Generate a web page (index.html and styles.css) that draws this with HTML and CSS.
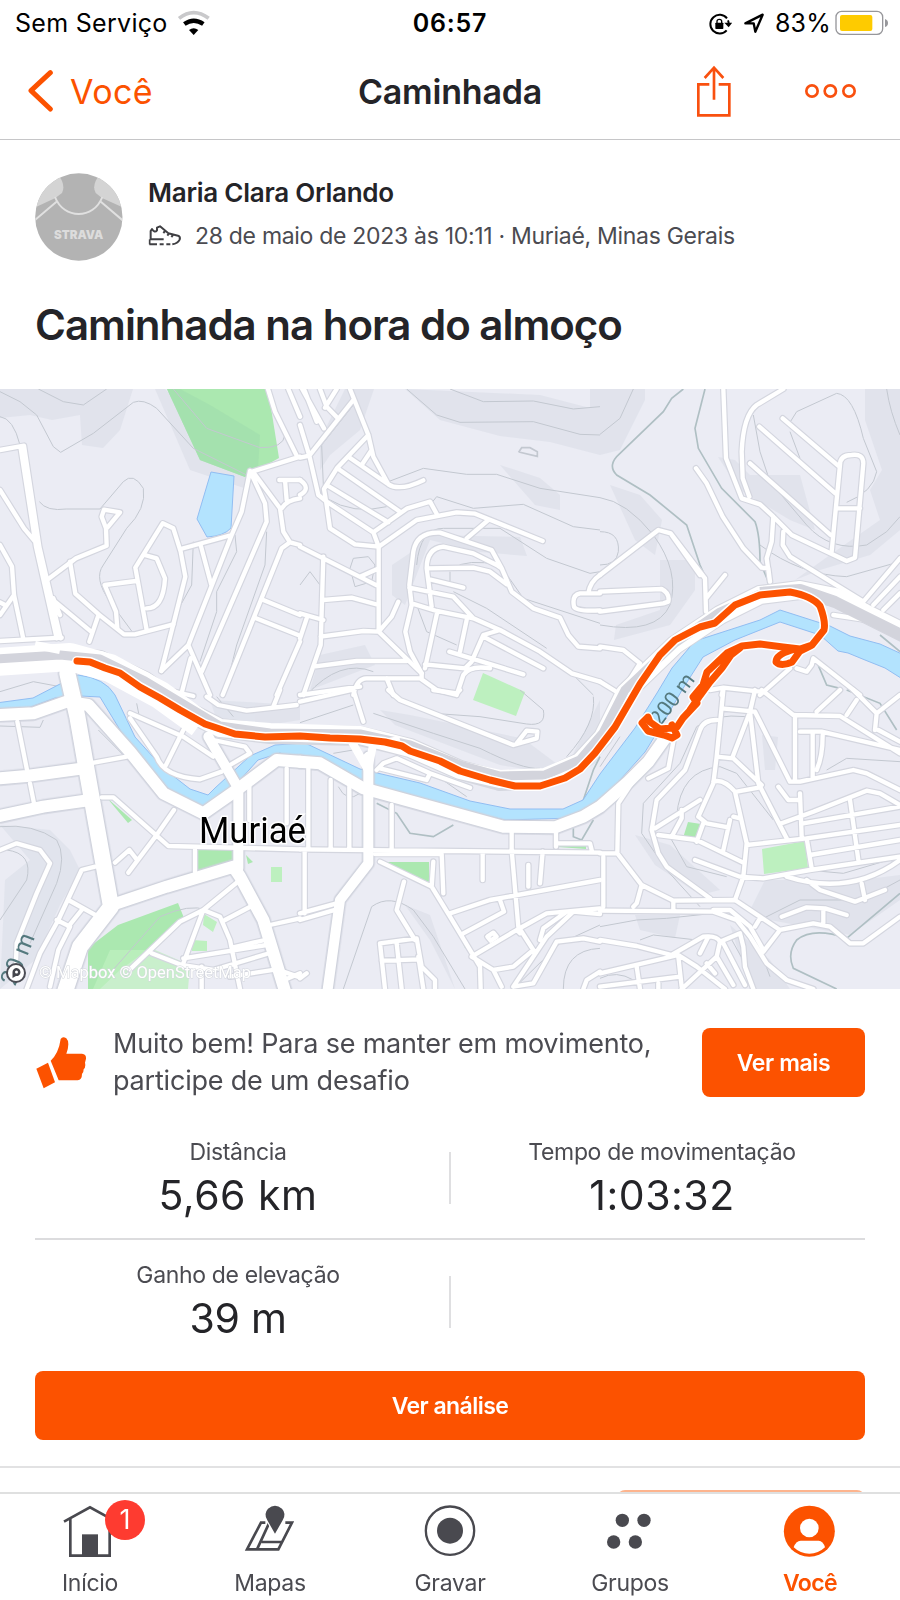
FILE: index.html
```html
<!DOCTYPE html>
<html lang="pt-BR">
<head>
<meta charset="utf-8">
<title>Caminhada</title>
<link rel="stylesheet" href="styles.css">
</head>
<body>
<div class="screen">
  <header class="status">
    <div class="status-left">
      <span class="carrier">Sem Serviço</span>
      <svg class="wifi" width="34" height="26" viewBox="530 25 102 78">
        <path d="M536 50Q580 16 625 50" fill="none" stroke="#c9c9cb" stroke-width="11"/>
        <path d="M552 67Q580 47 609 67" fill="none" stroke="#000" stroke-width="13"/>
        <path d="M566 85Q580 74 594 85L580 100Z"/>
      </svg>
    </div>
    <span class="clock">06:57</span>
    <div class="status-right">
      <svg class="lock" width="24" height="24" viewBox="775 33 72 72">
        <path d="M832 52A28 28 0 1 0 831 88M835 58Q838 64 837 72" fill="none" stroke="#000" stroke-width="6"/>
        <path d="M824 65L848 65L837 79Z"/>
        <rect x="797" y="65" width="24" height="19" rx="2"/>
        <path d="M802 67V61Q802 55 809 55Q816 55 816 61V67" fill="none" stroke="#000" stroke-width="4"/>
      </svg>
      <svg class="arrow" width="22" height="22" viewBox="880 34 66 66">
        <path d="M887 68L939 42L917 93L912 68Z" fill="none" stroke="#000" stroke-width="7" stroke-linejoin="round"/>
      </svg>
      <span class="percent">83%</span>
      <svg class="battery" width="54" height="26" viewBox="1155 27 162 78">
        <rect x="1158" y="31" width="140" height="69" rx="17" fill="none" stroke="#97979b" stroke-width="4"/>
        <rect x="1170" y="42" width="97" height="48" rx="6" fill="#fecb00"/>
        <path d="M1305 54Q1314 57 1314 66Q1314 75 1305 78Z" fill="#97979b"/>
      </svg>
    </div>
  </header>

  <nav class="nav">
    <div class="back">
      <svg width="26" height="44" viewBox="82 208 78 132"><path d="M149 219L91 273L149 328" fill="none" stroke="#fc5200" stroke-width="15" stroke-linecap="round" stroke-linejoin="round"/></svg>
      <span class="back-text">Você</span>
    </div>
    <h1 class="nav-title">Caminhada</h1>
    <div class="actions">
      <svg width="36" height="54" viewBox="738 192 108 162"><g fill="none" stroke="#f9500f" stroke-width="8"><path d="M778 253H745V346H838V253H806"/><path d="M792 299V202M764 234L792 203L820 234"/></g></svg>
      <svg width="54" height="16" viewBox="1062 248 162 48"><g fill="none" stroke="#f9500f" stroke-width="8"><circle cx="1086" cy="272" r="17"/><circle cx="1141" cy="272" r="17"/><circle cx="1197" cy="272" r="17"/></g></svg>
    </div>
  </nav>

  <section class="athlete">
    <svg class="avatar" width="88" height="88" viewBox="104 520 264 264">
      <defs><clipPath id="av"><circle cx="235.500" cy="652" r="131"/></clipPath></defs>
      <g clip-path="url(#av)">
        <rect x="104" y="520" width="264" height="264" fill="#b3b3b3"/>
        <path d="M170 520Q198 555 185 580L165 595L100 625V520Z" fill="#d4d4d4"/>
        <path d="M302 520Q272 555 286 580L305 595L372 625V520Z" fill="#d4d4d4"/>
        <path d="M96 668L172 603M374 668L298 603M164 592C190 660 280 660 306 592" fill="none" stroke="#e0e0e0" stroke-width="6"/>
        <text class="avatar-text" x="161" y="717" textLength="148" lengthAdjust="spacingAndGlyphs">STRAVA</text>
      </g>
    </svg>
    <div class="athlete-info">
      <div class="name">Maria Clara Orlando</div>
      <div class="meta">
        <svg width="34" height="22" viewBox="445 682 102 66"><path d="M453 725V700L457 694Q465 707 472 698V690L481 686L506 707L535 714Q543 717 540 726Q534 738 518 740M450 725H492M449 740H472M480 740H492M500 740H512M491 706L498 698M503 714L509 706M515 718L521 711" fill="none" stroke="#3f3f43" stroke-width="6" stroke-linejoin="round"/><path d="M450 725V740" stroke="#3f3f43" stroke-width="5"/></svg>
        <span class="date">28 de maio de 2023 às 10:11 · Muriaé, Minas Gerais</span>
      </div>
    </div>
  </section>

  <h2 class="title">Caminhada na hora do almoço</h2>

  <svg class="map" width="900" height="600" viewBox="0 389 900 600">
    <defs>
      <g id="minor">
        <g transform="translate(0 385) scale(.33333)">
          <path d="M0 195L72 182L118 485L182 760M62 190L108 485L170 760M0 315L72 430L118 485M0 480L36 545L42 630L70 762M0 690L42 630M0 652L15 660"/>
          <path d="M0 768L185 758M145 582L228 520L320 482L318 430L305 395L312 374L360 382L322 428"/>
          <path d="M210 530L226 626L296 688L372 748L405 748L520 718M160 640L180 690M165 650L276 742M268 770L296 688M180 690L150 655"/>
          <path d="M352 730L348 680L314 600L408 588M406 548L488 415L520 430L542 500L556 575L520 718L484 858M406 548L440 735M434 510L470 520L495 580Q490 670 440 670"/>
          <path d="M542 492L695 450M602 480L634 600M750 258L725 380L695 450L565 780L484 858M750 258L795 355L800 410L605 860M750 262L900 215M760 262L840 370L850 440L870 472L900 480M870 472L845 490L668 930M838 285H900M855 285L860 345M845 370Q860 345 900 340M790 645L900 690M768 700L900 752M900 770L830 930M565 780L630 930M572 820L546 920M804 12L825 80L890 212M865 12L900 95"/>
        </g>
        <g transform="translate(300 385) scale(.33333)">
          <path d="M0 218L28 212L160 45M28 212L0 120M0 0L72 130M12 12L50 110M60 12L80 65L112 98M75 68L110 12M150 12L205 150L220 215L265 298Q300 320 370 286M205 150L112 248L72 312L80 360L90 430L165 478L236 485M145 215L265 298M185 240L215 195M28 212L55 330L80 350M112 250L300 380M80 300L265 412M80 350L220 442M220 442L322 370L390 350L412 390M220 442L236 485L350 405L470 382L525 386L728 468M500 460L565 405M0 285Q35 310 0 330"/>
          <path d="M236 485V740M0 485L232 602M70 515L62 780L10 930M70 645L155 638L236 660M62 755L190 738L236 740M236 740L365 865M236 740L275 695L295 650M180 575L232 552M40 845L170 828H320M0 685L70 705M20 700L0 760"/>
          <path d="M365 865L330 800L316 740L335 660L328 600L340 500Q350 440 420 443L575 495L605 550L635 620L700 670L780 698L805 750L835 785L900 790M395 665L380 550Q380 490 430 485L520 505L590 540L605 550M380 550L520 548L570 560L620 598M385 582L490 608M328 608L460 635L520 700M335 655L410 678L520 700L600 735L720 800L815 865L900 890M412 680L375 850M500 705L480 800M448 800L670 868M375 838L495 850L515 830L550 750L600 735M550 755L730 850M0 930L180 905M160 930Q170 880 200 880L360 880L410 915L470 930M260 880L280 930M470 930L490 870Q510 840 570 850M365 880V865M900 570Q870 590 865 625M900 625H840Q815 630 822 665Q830 680 900 676"/>
        </g>
        <g transform="translate(600 385) scale(.33333)">
          <path d="M370 12L378 220L425 340L480 358L515 390L575 450L740 528L765 518L790 235Q790 205 755 210Q720 210 720 240L695 500M712 370H780M548 100L718 245M478 125L706 325M450 235L692 450M448 335L428 280L425 200Q430 90 470 60L550 12M288 250L320 295L368 395L430 490L485 548L505 550L510 590M520 395L515 470L500 520L510 590M550 440L548 480L570 515L790 650M790 650L900 520M820 660L900 575M850 675L900 625"/>
          <path d="M0 570L175 435L212 445L315 580L318 680M215 450L300 570M318 640L375 570M0 620L185 612Q210 625 205 650L190 655L0 680M0 785L70 795L120 835L60 930M0 890L65 930M900 720L700 690M480 930L570 850M590 850L620 860L635 840L640 820L780 930M330 915L370 908L480 920M370 910L365 930"/>
        </g>
        <g transform="translate(0 690) scale(.33333)">
          <path d="M52 95L82 245M90 280L102 340M270 220L380 200M305 322H340L505 468L900 478M470 435L522 360M470 435L385 548M345 518L388 480L410 508M390 85L470 200Q490 260 600 268L665 245M390 70L550 140L640 200M550 120L498 225M640 150L735 170L750 190L690 225M860 235V400M748 280V390M585 480V545"/>
          <path d="M0 480L50 460L120 480L150 520L110 610L50 760L48 815M285 530L245 540L175 690L120 790L80 897M205 630L295 680M170 690L210 710L175 780L150 890M245 660L205 710M720 570L610 660L550 820M610 660L540 695L390 838M610 660L660 680L690 750L720 897M675 690L755 648M700 772L795 750M550 805L800 765M455 790L545 825L640 840L800 792M605 830V897M810 705L900 685M690 860L830 838L900 862M840 875L900 850M620 20L655 45L740 62L890 45M840 0L820 50"/>
          <path d="M500 0L580 18"/>
        </g>
        <g transform="translate(300 690) scale(.33333)">
          <path d="M0 35L155 0M160 0L190 95M265 0L300 30L640 165L710 145L712 125L680 122L650 160M400 0L470 10L480 0M25 235V475M92 270V475M148 290V475M275 345V475M0 478L900 488M14 480V670M0 690L110 658M0 670L110 640M225 492H425L430 610M240 515L395 590L450 680L540 830L542 897M400 515L395 590M312 575L290 660L345 750M548 485V570M635 420V480L655 710L700 780M685 525V590M728 485L720 580M768 420V470M775 460L870 460L875 480M450 670L570 630L900 570M600 630L612 665L490 730M515 800L650 720L740 670L900 655M700 780L640 830L580 840L515 800M580 840L605 890M650 720L660 730M640 890L740 740L820 665L900 672M640 890L700 880L770 755L850 745L900 755M720 750L730 715L800 665M850 897L860 870L900 845M240 760L350 745L365 830L405 870V897M240 760L255 897M245 812L360 808M290 760L305 897M355 800L370 897M230 240L250 220L290 205L390 250L510 293M390 250L380 270L240 235M0 865L20 850"/>
          <path d="M562 740L580 728L590 740L572 752Z"/>
        </g>
        <g transform="translate(600 690) scale(.33333)">
          <path d="M370 0L350 200L340 280L295 380M365 55L465 65L570 275L600 275L760 240L800 250L900 300M465 0L450 65L398 200M350 200L400 205L485 285M450 65L475 280L560 445M410 305L480 292M340 275Q370 265 405 305L440 460L430 560L405 630M295 380L320 400L385 412M300 330L165 415M245 360V385L215 440M310 400L290 455M390 390L370 480M400 380L420 385M350 90Q310 90 300 120L255 240L170 330L155 420L175 490L200 530L330 625M175 435L290 450L430 518M285 510L420 560L490 565L630 540L900 500M440 465L620 445L900 405M485 0L580 75L720 78L900 190M650 65L720 0M760 0L830 70L825 120M740 75L770 30M830 70L900 15M835 120L900 155M585 75V270M638 130V265M600 125H665L900 180M668 135Q668 200 650 240M545 400L640 365L800 302L840 310L900 345M610 400L900 350M600 310L605 440M535 290L565 330L595 330M750 330L775 510M620 445L635 535M630 495L900 450M620 570L660 600L765 635L855 600M560 560Q750 620 900 510M785 580L795 630"/>
          <path d="M115 250L55 340L52 490M0 490H52L125 585L220 632L405 630L540 720L640 700L690 710L750 760H790L900 680M10 500V650M125 585L110 640L100 650M220 632V660M540 720L490 785M465 710L480 685M545 680L620 652L675 655L740 675M670 655V700M0 662L340 665L410 690L450 740L500 820L560 870L640 897M340 660L390 660L450 710L490 780M0 750L110 768L215 795L310 740Q350 735 360 755L420 730L430 770L435 830L460 897M0 850L235 795L290 830L375 897M235 800L245 890M110 830L120 897M0 890L240 860M325 740L300 790M360 755L350 800L245 897M370 760L435 885M350 800L400 885M320 820L345 850M145 265L205 235L220 155M175 880V897"/>
        </g>
      </g>
      <g id="major">
        <g transform="translate(0 690) scale(.33333)">
          <path class="w2" d="M0 75L100 70L200 35L265 45L390 185L490 310L610 370L710 300L830 210L900 215"/>
          <path class="w3" d="M202 -50L232 80L260 240L333 650L240 770L190 920"/>
          <path class="w2" d="M0 265L80 258L250 235"/>
          <path class="w2" d="M0 378L130 350L270 330"/>
          <path class="w2" d="M350 640L500 590L700 530L720 560L790 690L860 920"/>
          <path class="w1" d="M625 140L715 295V535"/>
        </g>
        <g transform="translate(300 690) scale(.33333)">
          <path class="w2" d="M0 215L60 220L190 295L610 410L765 412L850 380L900 350L985 275L1045 215L1095 145"/>
          <path class="w1" d="M205 200V520L120 630L80 920"/>
        </g>
      </g>
    </defs>

    <rect x="0" y="389" width="900" height="600" fill="#ebecf4"/>
    <!-- terrain shading -->
    <g fill="#dfe2eb" opacity=".8">
      <path d="M0 389H133L120 430L103 448L82 445L80 415L52 420L30 415L0 418Z"/>
      <path d="M155 389L190 470L250 490L245 470L165 389Z"/>
      <path d="M345 389H374L360 430L330 455L320 470L320 440Z"/>
      <path d="M405 389L440 420L500 436L550 442L600 455L620 450L645 400V389H590V408L540 395Z"/>
      <path d="M500 465L540 478L560 495V510L535 505Z"/>
      <path d="M392 565L410 553L430 535L520 537L527 556L480 552L430 540L405 605L392 595Z"/>
      <path d="M610 485L640 495L662 520L655 555L635 540Z"/>
      <path d="M718 457L735 460L750 475L800 475L815 530L790 520L740 490Z"/>
      <path d="M865 389H900V530L870 555L820 570L795 580L830 555L880 520L870 490L882 470L865 420Z"/>
      <path d="M660 560L695 560V590L670 625L614 640L616 625L660 610Z"/>
      <path d="M320 655L365 645L375 665L310 690Z"/>
      <path d="M380 710L410 715L530 740V770L500 765L395 725Z"/>
      <path d="M525 740L565 770L600 700V760L570 780L530 770Z"/>
      <path d="M0 825L50 830L70 850L80 870L60 905L35 960L0 989L5 880L30 860Z"/>
      <path d="M210 700L300 705V720L250 728L215 715Z"/>
      <path d="M405 905L430 915L455 989L430 940Z"/>
      <path d="M635 835L670 845L720 890L700 895L655 865Z"/>
      <path d="M762 735L778 737L775 770L765 770Z"/>
      <path d="M765 880H860L900 875V900L850 935L770 920L750 910Z"/>
      <path d="M635 915H680L675 938L640 930Z"/>
      <path d="M730 925L770 960L790 989H750Z"/>
    </g>
    <!-- parks -->
    <g fill="#abe8b0">
      <path d="M167 389H268L279 458L245 477L200 460Z"/>
      <path d="M88 989V948L118 925L178 903L184 918L150 948L120 970L100 989Z"/>
      <path d="M197 850H233V862L198 872ZM246 855L253 862L248 864ZM107 798L132 820L128 823ZM386 862H429V882L387 868ZM688 822L701 824L696 839L683 838ZM558 843L586 845V849L558 847ZM450 916L470 950L465 948Z"/>
    </g>
    <path d="M180 389L210 405L230 417L260 435L258 470L245 477L200 460L167 389Z" fill="#a3dfae" opacity=".8"/>
    <g fill="#bdf0bf">
      <path d="M483 673L525 692L516 716L473 700ZM762 849L805 841L808 868L764 874ZM271 867H282V882H271ZM204 914L217 922L213 932L203 925ZM192 940L207 941V951H192Z"/>
      <path d="M93 989L110 950H155L190 965L188 989Z" opacity=".75"/>
    </g>
    <!-- contours -->
    <g class="contour">
      <g transform="translate(0 385) scale(.33333)"><path d="M0 20L60 50L110 90L160 185L182 202L280 145L400 52Q430 40 470 70L580 190L740 270M115 12L190 50L250 60L320 12M520 12L620 130L780 188Q850 190 855 150M0 95Q40 100 60 180M118 350Q140 380 200 372H300L370 290Q400 260 430 310Q440 370 380 430L310 540Q280 580 330 650L400 745M705 450L710 500L650 620V680L600 830M800 440L795 540L710 780L680 900M580 470L575 600L520 700M0 920L100 890L180 905"/></g>
      <g transform="translate(300 385) scale(.33333)"><path d="M320 12L410 90L480 112L700 110L840 148L900 150M450 12L550 50L700 48L820 72L900 65M265 290L370 250L500 268L590 268L720 310L900 338M390 360L410 335L520 370L670 358L820 425L900 435M350 540Q360 430 430 430L600 430L740 520L870 565L900 560M460 550Q500 520 600 540L670 640L900 715M450 560V590M350 660L380 740L470 780M460 620L560 670L740 790M160 60L65 180L70 300M80 340Q160 390 260 365M20 930Q120 820 220 860M150 550L160 520L205 515L225 540L215 590L165 605ZM0 600L30 560L60 600M880 930L800 850"/><path d="M657 200L665 188H690L712 200V214L660 202Z" class="bold"/></g>
      <g transform="translate(600 385) scale(.33333)"><path d="M100 12L60 100L0 148M0 338Q80 350 160 450Q240 560 210 660Q170 750 0 720M0 440Q60 440 55 500Q50 540 0 540M460 90L480 200L510 290L620 420Q690 500 800 480L860 440L900 395M480 480Q600 570 740 575L900 530M565 120L590 80L710 25Q760 30 790 160L830 260Q820 320 740 352M570 140L600 220M860 12Q870 80 900 150"/><g class="ridge"><path d="M250 12L215 40L190 80L60 205Q20 240 50 270L150 330L260 420L300 540L318 580M315 12L285 130L295 190L365 310L465 410Q480 450 480 530L505 590M650 830L680 900L720 910M840 750L900 800"/></g></g>
      <g transform="translate(0 690) scale(.33333)"><path d="M0 410Q100 400 170 450Q200 500 170 580L90 760M20 480Q100 490 80 570L0 690M330 850L480 680Q570 640 620 660M0 108L120 112L130 90M295 120L380 205M410 40L420 90M650 20L700 80"/></g>
      <g transform="translate(300 690) scale(.33333)"><path d="M0 98L160 45M220 70L400 130L540 175Q670 240 720 235M400 70L540 80L680 102Q740 110 730 60L660 0M100 190L160 180M115 290Q140 340 180 310M400 250L500 320M130 897L215 650Q270 610 340 660L400 740L495 897M640 897L780 760L900 705M790 897Q790 780 900 775M880 20Q890 100 800 200"/><g class="ridge"><path d="M230 340L290 370L330 430L400 440L460 405M820 415V440L845 450L880 390M900 200L880 240L850 330"/></g></g>
      <g transform="translate(600 690) scale(.33333)"><path d="M440 80Q340 70 290 110L240 220L130 340L125 430L200 540L300 650M230 380Q240 240 360 230L410 250L520 390M215 450L260 530L380 560M620 540L730 550L900 500M680 240L740 205L900 215M480 690L600 630H790L900 570M0 710L110 690L200 685L340 670M120 750L160 735L290 750M390 740L440 830M470 750L510 860M0 865Q50 840 100 870M0 230L60 140"/><g class="ridge"><path d="M710 897L580 835Q560 790 590 750Q640 710 740 745L900 610M740 0L840 40L890 120"/></g></g>
    </g>
    <!-- water -->
    <g class="water">
      <path d="M211 472L234 476L231 528Q224 536 207 537L197 519Z"/>
      <path d="M-4 703L33 698L60 684L78 675Q105 678 115 695L135 737L163 768L190 789L208 795L215 788L250 756L275 745L305 743L360 769L420 783L470 801L510 809L563 809L583 800L600 774L635 728L657 693L672 668L695 641L760 620L780 610L830 626L850 636L880 644L904 655V680L885 668L865 660L848 653L838 651L820 635L780 622L735 640L703 657L682 690L666 718L645 752L605 797L592 809L575 818L505 820L470 812L375 790L330 772L280 753L258 760L222 800L208 807L190 805L170 790L145 768L120 730L100 697L80 696L55 698L28 708L-4 709Z"/>
    </g>

    <use href="#minor" class="casing"/>
    <use href="#major" class="casing-major"/>
    <path class="hw-casing" d="M-5 662L60 656L100 660L145 681L185 710L220 728L270 734L360 736L410 748L460 770L500 781L545 779L580 762L603 737L625 693L675 645L720 615L760 595L800 590L835 597L865 613L905 633"/>
    <use href="#minor" class="road"/>
    <use href="#major" class="road-major"/>
    <path class="hw-white" d="M-5 660L60 655L100 660L145 681L185 710L220 728L270 732L360 735L410 748L460 770L500 779L545 777L580 762L603 737L625 693L675 645L720 615L760 595L800 590L835 597L865 613L905 633"/>
    <path class="hw-white wide" d="M-5 662L70 657L110 668L160 695L200 724"/>
    <path class="hw-gray" d="M-5 659L60 655L100 659L145 681L185 705L220 726L270 733L360 734L410 745L460 765L500 776L545 775L580 760L603 733L625 690L675 643L720 612L760 594"/>
    <path class="hw-gray right" d="M760 593L800 590L835 602L865 617L905 637"/>
    <path d="M35 645L60 650M352 742L368 770L373 745L400 740" class="ramp"/>

    <text class="elev" transform="translate(660 727) rotate(-53)">200 m</text>
    <text class="elev small" transform="translate(15 987) rotate(-68)">20 m</text>

    <!-- recorded activity -->
    <g class="track-halo"><use href="#trk"/></g>
    <g class="track">
      <path id="trk" d="M77 661L90 662L105 668L120 673L140 687L160 698L180 710L205 724L235 734L265 737L300 736L330 738L360 739L385 742L402 746L410 751L440 761L460 771L490 780L515 786L540 786L565 778L580 769L595 753L615 727L640 684L660 655L675 640L700 627L715 623L735 605L760 595L790 592Q812 596 820 606Q826 622 824 630L812 645L800 649L783 647L760 644L742 646L727 653L707 672L703 685L693 697L697 703L683 718L677 727L672 728L660 729L650 722L648 717L642 723L648 731L664 735L672 738L677 735L672 725M812 645L800 651L792 662Q781 667 776 662Q776 654 795 649M740 648L731 655L722 668L710 682L699 697L690 710"/>
    </g>

    <text class="city" x="199" y="843" textLength="107" lengthAdjust="spacingAndGlyphs">Muriaé</text>
    <circle cx="16" cy="973" r="9" fill="#fff" stroke="#4c4d55" stroke-width="2"/>
    <path d="M12.500 978V972A4 4 0 1 1 16 976Z" fill="#44454c"/><circle cx="16.500" cy="972" r="1.500" fill="#fff"/>
    <text class="credit" x="39" y="978" textLength="212" lengthAdjust="spacingAndGlyphs">© Mapbox © OpenStreetMap</text>
  </svg>

  <section class="challenge">
    <svg width="52" height="54" viewBox="106 1106 156 162" class="thumb"><g transform="translate(0 998)" fill="#fc5200"><path d="M110 206L145 188L166 247L132 265Z"/><path d="M153 182Q177 160 183 117Q189 107 200 115Q212 127 200 161H247Q260 162 259 176Q257 184 256 188Q259 202 252 208Q252 218 247 222Q247 239 234 241H177Z"/></g></svg>
    <p class="challenge-text">Muito bem! Para se manter em movimento,<br>participe de um desafio</p>
    <button class="btn more">Ver mais</button>
  </section>

  <section class="stats">
    <div class="row">
      <div class="stat left"><span class="label">Distância</span><span class="value">5,66 km</span></div>
      <i class="divider"></i>
      <div class="stat right"><span class="label">Tempo de movimentação</span><span class="value">1:03:32</span></div>
    </div>
    <div class="row second">
      <div class="stat left"><span class="label">Ganho de elevação</span><span class="value tight">39 m</span></div>
      <i class="divider"></i>
      <div class="stat right"></div>
    </div>
  </section>

  <div class="analysis"><button class="btn full">Ver análise</button></div>
  <div class="next"><div class="next-card"></div></div>

  <footer class="tabs">
    <div class="tab">
      <svg width="60" height="56" viewBox="180 1804 180 168"><g transform="translate(0 1350)"><path d="M192 516L270 473L348 516M211 505V618H329V505" fill="none" stroke="#49494f" stroke-width="8"/><rect x="246" y="554" width="48" height="66" fill="#49494f"/></g></svg>
      <span class="badge">1</span>
      <span class="tab-text">Início</span>
    </div>
    <div class="tab">
      <svg width="60" height="56" viewBox="720 1804 180 168"><g transform="translate(0 1350)"><path d="M796 519H783L741 599H835L876 519H856M808 519L771 599M785 577H846" fill="none" stroke="#49494f" stroke-width="8"/><path d="M825 562L795 506Q787 461 825 461Q863 461 855 506Z" fill="#fff"/><path d="M825 552L802 512Q790 492 804 477Q825 460 846 477Q860 492 848 512Z" fill="#49494f"/></g></svg>
      <span class="tab-text">Mapas</span>
    </div>
    <div class="tab">
      <svg width="60" height="56" viewBox="1260 1804 180 168"><g transform="translate(0 1350)"><circle cx="1350" cy="543" r="72.500" fill="none" stroke="#49494f" stroke-width="7"/><circle cx="1350" cy="543" r="39" fill="#49494f"/></g></svg>
      <span class="tab-text">Gravar</span>
    </div>
    <div class="tab">
      <svg width="60" height="56" viewBox="1800 1804 180 168"><g transform="translate(1350 1350)" fill="#49494f"><circle cx="517" cy="512" r="20"/><circle cx="582" cy="512" r="20"/><circle cx="491" cy="577" r="20"/><circle cx="556" cy="577" r="20"/></g></svg>
      <span class="tab-text">Grupos</span>
    </div>
    <div class="tab">
      <svg width="60" height="56" viewBox="2340 1804 180 168"><g transform="translate(1350 1350)"><circle cx="1078" cy="544.500" r="76.500" fill="#fc5200"/><circle cx="1078" cy="535" r="28" fill="#fff"/><path d="M1031 593Q1038 573 1052 573H1106Q1119 573 1125 593Q1105 612 1078 612Q1051 612 1031 593Z" fill="#fff"/></g></svg>
      <span class="tab-text active">Você</span>
    </div>
  </footer>
</div>
</body>
</html>
```
FILE: styles.css
```css
* { box-sizing: border-box; }
body { margin: 0; background: #fff; }
.screen {
  width: 900px; height: 1600px; overflow: hidden;
  display: flex; flex-direction: column;
  font-family: Inter, "Liberation Sans", sans-serif;
  color: #242428; white-space: nowrap;
}
.screen > * { flex: none; }
svg { display: block; flex: none; }

.status {
  height: 46px; padding: 0 11px; color: #000;
  display: grid; grid-template-columns: 1fr auto 1fr; align-items: center;
  font-size: 25px; line-height: 46px;
}
.status-left, .status-right { display: flex; align-items: center; }
.status-left { padding-left: 4px; }
.status-right { justify-content: flex-end; }
.carrier { letter-spacing: .3px; margin-right: 9px; }
.clock { font-weight: 600; letter-spacing: .8px; }
.lock { margin-top: 1px; }
.arrow { margin: 0 10px 0 11px; }
.percent { letter-spacing: .2px; }
.battery { margin-left: 4px; }

.nav {
  height: 94px; border-bottom: 1px solid #c6c6c8; padding: 0 28px 4px;
  display: grid; grid-template-columns: 1fr auto 1fr; align-items: center;
  font-size: 34px; line-height: 88px;
}
.back { display: flex; align-items: center; color: #fc5200; font-weight: 400; }
.back-text { margin: 2px 0 0 16px; letter-spacing: .4px; line-height: 86px; }
.nav-title { margin: 2px 0 0; line-height: 86px; font-size: 34px; font-weight: 600; letter-spacing: -.2px; }
.actions { display: flex; align-items: center; justify-content: flex-end; gap: 72px; margin-right: 14px; }

.athlete { height: 122px; padding: 33px 35px 0; display: flex; }
.athlete-info { margin-left: 25px; padding-top: 2px; }
.name { font-size: 26px; line-height: 36px; font-weight: 600; letter-spacing: -.25px; }
.meta { display: flex; align-items: center; margin-top: 8px; line-height: 34px; }
.date { font-size: 23px; font-weight: 400; color: #4b4b51; margin-left: 13px; letter-spacing: -.3px; }
.avatar-text { font: 900 36px Inter, sans-serif; fill: #dcdcdc; }
.title { margin: 0; height: 127px; padding: 35px 35px 0; font-size: 42px; line-height: 56px; font-weight: 600; letter-spacing: -1px; }

.map { overflow: hidden; }
.contour { fill: none; stroke: #c3c8d0; stroke-width: 3; }
.bold { stroke-width: 5; }
.ridge { stroke: #afbfc3; stroke-width: 5; }
.water { fill: #b3e3fe; stroke: #91bdf2; stroke-width: 1; }
.casing, .casing-major, .road, .road-major { fill: none; stroke-linejoin: round; stroke-linecap: round; }
.casing { stroke: #d4d6df; stroke-width: 20px; filter: blur(.5px); }
.road { stroke: #fff; stroke-width: 13px; }
.casing-major { --edge: 9px; stroke: #cfd2dc; filter: blur(.5px); }
.road-major { --edge: 0px; stroke: #fff; }
.w1 { stroke-width: calc(30px + var(--edge)); }
.w2 { stroke-width: calc(36px + var(--edge)); }
.w3 { stroke-width: calc(48px + var(--edge)); }
.hw-casing, .hw-white, .hw-gray, .ramp { fill: none; stroke-linejoin: round; }
.hw-casing { stroke: #d5d7df; stroke-width: 20; }
.hw-white { stroke: #fff; stroke-width: 18; }
.hw-white.wide { stroke-width: 28; }
.hw-gray { stroke: #d3d4dc; stroke-width: 9; }
.hw-gray.right { stroke-width: 12; }
.ramp { stroke: #fff; stroke-width: 8; }
.track, .track-halo { fill: none; stroke-linejoin: round; stroke-linecap: round; }
.track { stroke: #fc5200; stroke-width: 7; }
.track-halo { stroke: #fff; stroke-width: 10; }
.elev { font: 21px Roboto, sans-serif; fill: #54797e; }
.elev.small { font-size: 24px; }
.city { font: 36px Roboto, sans-serif; fill: #000; stroke: #fff; stroke-width: 3; paint-order: stroke; }
.credit { font: 17px Roboto, sans-serif; fill: #fff; stroke: #d3d6dc; stroke-width: 1; paint-order: stroke; }

.challenge { height: 147px; padding: 0 35px; display: flex; align-items: center; }
.challenge-text { margin: -2px auto 0 26px; font-size: 27px; line-height: 37px; font-weight: 400; letter-spacing: -.2px; color: #4b4b51; }
.btn {
  border: 0; border-radius: 8px; background: #fc5200; color: #fff; padding: 0; height: 69px;
  font-family: inherit; font-size: 23px; font-weight: 600; letter-spacing: -.55px;
}
.more { width: 163px; letter-spacing: -.4px; }
.full { width: 100%; }

.stats { margin: 0 35px; height: 235px; }
.row { height: 104px; display: flex; border-bottom: 2px solid #dcdcde; }
.row .stat { margin-top: -1px; }
.row.second .stat { margin-top: 0; }
.row.second { height: 131px; padding-top: 18px; border: 0; }
.stat { flex: 1; display: flex; flex-direction: column; align-items: center; }
.stat.left { padding-right: 8px; }
.stat.right { padding-left: 8px; }
.divider { width: 2px; height: 52px; margin-top: 16px; background: #dfdfe1; }
.second .divider { margin-top: 18px; }
.label { font-size: 23px; line-height: 34px; font-weight: 400; letter-spacing: -.35px; color: #4b4b51; }
.value { font-size: 41px; line-height: 52px; letter-spacing: .5px; }
.value.tight { letter-spacing: -.3px; }
.analysis { height: 97px; padding: 0 35px; border-bottom: 2px solid #e2e2e3; }
.next { height: 24px; padding: 22px 35px 0 617px; overflow: hidden; }
.next-card { height: 20px; border: 2px solid #fdb48e; border-radius: 8px; }

.tabs { height: 108px; border-top: 2px solid #dfe0e0; display: flex; }
.tab { width: 180px; position: relative; display: flex; flex-direction: column; align-items: center; padding-top: 7px; }
.tab-text { font-size: 23px; line-height: 34px; margin-top: 9px; font-weight: 400; letter-spacing: -.3px; color: #4b4b51; }
.tab-text.active { color: #fc5200; font-weight: 600; letter-spacing: -.6px; }
.badge {
  position: absolute; left: 105px; top: 6px; width: 40px; height: 40px; border-radius: 50%;
  background: #fe3b30; color: #fff; font-size: 27px; line-height: 39px; text-align: center;
}
```
